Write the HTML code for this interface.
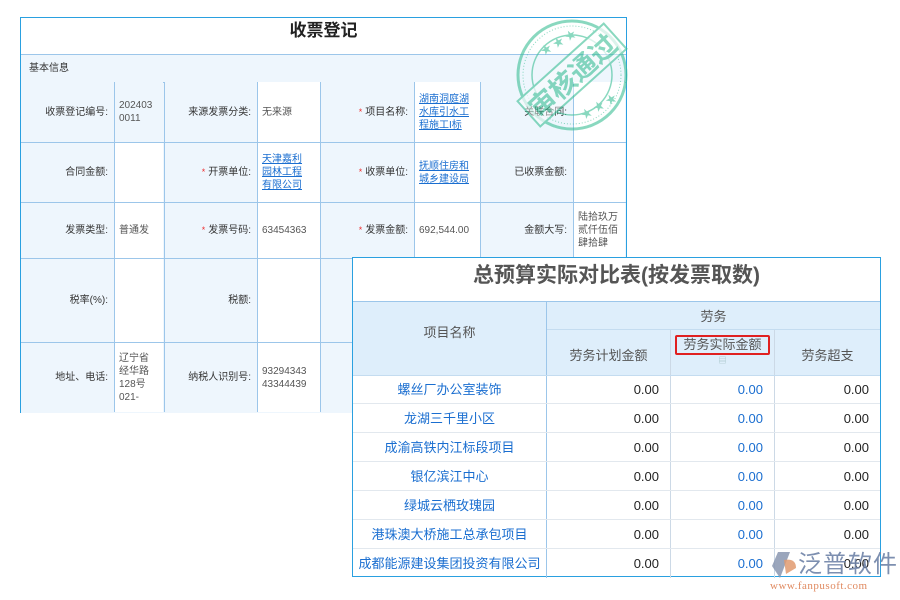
<!DOCTYPE html>
<html><head><meta charset="utf-8"><style>
*{margin:0;padding:0;box-sizing:border-box}
body{width:900px;height:600px;background:#fff;position:relative;overflow:hidden;font-family:"Liberation Sans","Noto Sans CJK SC",sans-serif;color:#333}
.a{position:absolute}
#back{left:20px;top:17px;width:607px;height:396px;border:1px solid #2aa0e0;background:#fff}
.bt{left:0;top:0;width:605px;height:36px;text-align:center;font-size:17px;font-weight:bold;line-height:26px;color:#222}
.hl{position:absolute;background:#9cc6ea}
.cell{position:absolute;font-size:10px;display:flex;align-items:center;line-height:13px}
.lab{justify-content:flex-end;padding-right:6px;background:#eef6fd}
.val{padding-left:4px;color:#555;background:#fff}
.lk{color:#1a6ed0;text-decoration:underline}
.st{color:#e33;margin-right:3px;font-size:9px}
#front{left:352px;top:257px;width:529px;height:320px;border:1px solid #2aa0e0;background:#fff}
.ft{left:0;top:0;width:527px;height:43px;text-align:center;font-size:21px;font-weight:bold;line-height:36px;color:#555}
.fh{position:absolute;background:#deeefb;color:#555;font-size:13px;display:flex;align-items:center;justify-content:center}
.fr{position:absolute;font-size:13px;height:29px;line-height:29px}
</style></head><body>
<div id="back" class="a">
 <div class="a bt">收票登记</div>
 <div class="a" style="left:0;top:36px;width:605px;height:29px;background:#eef6fd;border-top:1px solid #9cc6ea;border-bottom:1px solid #9cc6ea;font-size:10px;line-height:27px;padding-left:8px">基本信息</div>
 <div class="a" style="left:0;top:65px;width:605px;height:330px;background:#eef6fd"></div>
</div>
<div class="a" style="left:20px;top:82px;width:607px;height:331px">
 <div class="cell lab" style="left:1px;top:0;width:93px;height:60px">收票登记编号:</div>
 <div class="cell val" style="left:95px;top:0;width:48px;height:60px;background:#eef6fd">202403<br>0011</div>
 <div class="cell lab" style="left:144px;top:0;width:93px;height:60px">来源发票分类:</div>
 <div class="cell val" style="left:238px;top:0;width:62px;height:60px">无来源</div>
 <div class="cell lab" style="left:301px;top:0;width:93px;height:60px"><span class="st">*</span>项目名称:</div>
 <div class="cell val lk" style="left:395px;top:0;width:65px;height:60px">湖南洞庭湖<br>水库引水工<br>程施工I标</div>
 <div class="cell lab" style="left:461px;top:0;width:92px;height:60px">关联合同:</div>
 <div class="cell val" style="left:554px;top:0;width:51px;height:60px"></div>
 <div class="cell lab" style="left:1px;top:61px;width:93px;height:59px">合同金额:</div>
 <div class="cell val" style="left:95px;top:61px;width:48px;height:59px"></div>
 <div class="cell lab" style="left:144px;top:61px;width:93px;height:59px"><span class="st">*</span>开票单位:</div>
 <div class="cell val lk" style="left:238px;top:61px;width:62px;height:59px">天津嘉利<br>园林工程<br>有限公司</div>
 <div class="cell lab" style="left:301px;top:61px;width:93px;height:59px"><span class="st">*</span>收票单位:</div>
 <div class="cell val lk" style="left:395px;top:61px;width:65px;height:59px">抚顺住房和<br>城乡建设局</div>
 <div class="cell lab" style="left:461px;top:61px;width:92px;height:59px">已收票金额:</div>
 <div class="cell val" style="left:554px;top:61px;width:51px;height:59px"></div>
 <div class="cell lab" style="left:1px;top:121px;width:93px;height:55px">发票类型:</div>
 <div class="cell val" style="left:95px;top:121px;width:48px;height:55px">普通发</div>
 <div class="cell lab" style="left:144px;top:121px;width:93px;height:55px"><span class="st">*</span>发票号码:</div>
 <div class="cell val" style="left:238px;top:121px;width:62px;height:55px">63454363</div>
 <div class="cell lab" style="left:301px;top:121px;width:93px;height:55px"><span class="st">*</span>发票金额:</div>
 <div class="cell val" style="left:395px;top:121px;width:65px;height:55px">692,544.00</div>
 <div class="cell lab" style="left:461px;top:121px;width:92px;height:55px">金额大写:</div>
 <div class="cell val" style="left:554px;top:121px;width:51px;height:55px">陆拾玖万<br>贰仟伍佰<br>肆拾肆</div>
 <div class="cell lab" style="left:1px;top:177px;width:93px;height:83px">税率(%):</div>
 <div class="cell val" style="left:95px;top:177px;width:48px;height:83px"></div>
 <div class="cell lab" style="left:144px;top:177px;width:93px;height:83px">税额:</div>
 <div class="cell val" style="left:238px;top:177px;width:62px;height:83px"></div>
 <div class="cell lab" style="left:301px;top:177px;width:93px;height:83px"></div>
 <div class="cell lab" style="left:1px;top:261px;width:93px;height:69px">地址、电话:</div>
 <div class="cell val" style="left:95px;top:261px;width:48px;height:69px">辽宁省<br>经华路<br>128号<br>021-</div>
 <div class="cell lab" style="left:144px;top:261px;width:93px;height:69px">纳税人识别号:</div>
 <div class="cell val" style="left:238px;top:261px;width:62px;height:69px">93294343<br>43344439</div>
 <div class="cell lab" style="left:301px;top:261px;width:93px;height:69px"></div>
 <div class="cell val" style="left:395px;top:177px;width:65px;height:153px"></div>
</div>
<div class="hl" style="left:21px;top:142px;width:605px;height:1px"></div>
<div class="hl" style="left:21px;top:202px;width:605px;height:1px"></div>
<div class="hl" style="left:21px;top:258px;width:605px;height:1px"></div>
<div class="hl" style="left:21px;top:342px;width:605px;height:1px"></div>
<div class="hl" style="left:114px;top:82px;width:1px;height:330px"></div>
<div class="hl" style="left:164px;top:82px;width:1px;height:330px"></div>
<div class="hl" style="left:257px;top:82px;width:1px;height:330px"></div>
<div class="hl" style="left:320px;top:82px;width:1px;height:330px"></div>
<div class="hl" style="left:414px;top:82px;width:1px;height:330px"></div>
<div class="hl" style="left:480px;top:82px;width:1px;height:176px"></div>
<div class="hl" style="left:573px;top:82px;width:1px;height:176px"></div>
<svg class="a" style="left:510px;top:13px" width="124" height="124" viewBox="0 0 124 124">
 <g opacity="0.6" fill="none" stroke="#3cbf95">
  <circle cx="62" cy="62" r="54" stroke-width="3"/>
  <circle cx="62" cy="62" r="49" stroke-width="1" stroke-dasharray="1 2"/>
  <circle cx="62" cy="62" r="40" stroke-width="1.5"/>
  <g transform="rotate(-42 62 62)">
   <rect x="4" y="45" width="116" height="34" fill="#fff" fill-opacity="0.7" stroke-width="2"/>
   <text x="62" y="73" text-anchor="middle" font-size="27" font-weight="bold" fill="#3cbf95" stroke="none" font-family="Noto Sans CJK SC,sans-serif">审核通过</text>
  </g>
  <text x="30" y="38" font-size="11" fill="#3cbf95" stroke="none" transform="rotate(-30 40 34)">★ ★ ★</text>
  <text x="70" y="100" font-size="11" fill="#3cbf95" stroke="none" transform="rotate(-30 84 96)">★ ★ ★</text>
 </g>
</svg>
<div id="front" class="a">
 <div class="a ft">总预算实际对比表(按发票取数)</div>
 <div class="fh" style="left:0;top:43px;width:193px;height:74px;border-top:1px solid #9cc6ea;padding-bottom:14px">项目名称</div>
 <div class="fh" style="left:194px;top:43px;width:333px;height:28px;border-top:1px solid #9cc6ea">劳务</div>
 <div class="fh" style="left:194px;top:72px;width:123px;height:45px;padding-top:4px">劳务计划金额</div>
 <div class="fh" style="left:318px;top:72px;width:103px;height:45px;flex-direction:column;justify-content:flex-start;padding-top:5px"><span style="border:2px solid #e02020;border-radius:2px;padding:0 6px;line-height:16px">劳务实际金额</span><span style="font-size:8px;color:#9bb">▤</span></div>
 <div class="fh" style="left:422px;top:72px;width:105px;height:45px;padding-top:4px">劳务超支</div>
 <div class="hl" style="left:193px;top:43px;width:1px;height:277px"></div>
 <div class="hl" style="left:317px;top:72px;width:1px;height:248px;background:#ccd9e6"></div>
 <div class="hl" style="left:421px;top:72px;width:1px;height:248px;background:#ccd9e6"></div>
 <div class="hl" style="left:194px;top:71px;width:333px;height:1px;background:#c4dcf0"></div>
 <div class="hl" style="left:0;top:117px;width:527px;height:1px;background:#c4dcf0"></div>
</div>
<div class="a" style="left:353px;top:375px;width:527px">
 <div style="position:relative;height:29px;border-bottom:1px solid #e2e8ee"><span class="fr" style="left:0;width:193px;text-align:center;color:#1a6ed0">螺丝厂办公室装饰</span><span class="fr" style="left:194px;width:112px;text-align:right;color:#222">0.00</span><span class="fr" style="left:318px;width:92px;text-align:right;color:#1a6ed0">0.00</span><span class="fr" style="left:422px;width:94px;text-align:right;color:#222">0.00</span></div>
 <div style="position:relative;height:29px;border-bottom:1px solid #e2e8ee"><span class="fr" style="left:0;width:193px;text-align:center;color:#1a6ed0">龙湖三千里小区</span><span class="fr" style="left:194px;width:112px;text-align:right;color:#222">0.00</span><span class="fr" style="left:318px;width:92px;text-align:right;color:#1a6ed0">0.00</span><span class="fr" style="left:422px;width:94px;text-align:right;color:#222">0.00</span></div>
 <div style="position:relative;height:29px;border-bottom:1px solid #e2e8ee"><span class="fr" style="left:0;width:193px;text-align:center;color:#1a6ed0">成渝高铁内江标段项目</span><span class="fr" style="left:194px;width:112px;text-align:right;color:#222">0.00</span><span class="fr" style="left:318px;width:92px;text-align:right;color:#1a6ed0">0.00</span><span class="fr" style="left:422px;width:94px;text-align:right;color:#222">0.00</span></div>
 <div style="position:relative;height:29px;border-bottom:1px solid #e2e8ee"><span class="fr" style="left:0;width:193px;text-align:center;color:#1a6ed0">银亿滨江中心</span><span class="fr" style="left:194px;width:112px;text-align:right;color:#222">0.00</span><span class="fr" style="left:318px;width:92px;text-align:right;color:#1a6ed0">0.00</span><span class="fr" style="left:422px;width:94px;text-align:right;color:#222">0.00</span></div>
 <div style="position:relative;height:29px;border-bottom:1px solid #e2e8ee"><span class="fr" style="left:0;width:193px;text-align:center;color:#1a6ed0">绿城云栖玫瑰园</span><span class="fr" style="left:194px;width:112px;text-align:right;color:#222">0.00</span><span class="fr" style="left:318px;width:92px;text-align:right;color:#1a6ed0">0.00</span><span class="fr" style="left:422px;width:94px;text-align:right;color:#222">0.00</span></div>
 <div style="position:relative;height:29px;border-bottom:1px solid #e2e8ee"><span class="fr" style="left:0;width:193px;text-align:center;color:#1a6ed0">港珠澳大桥施工总承包项目</span><span class="fr" style="left:194px;width:112px;text-align:right;color:#222">0.00</span><span class="fr" style="left:318px;width:92px;text-align:right;color:#1a6ed0">0.00</span><span class="fr" style="left:422px;width:94px;text-align:right;color:#222">0.00</span></div>
 <div style="position:relative;height:29px"><span class="fr" style="left:0;width:193px;text-align:center;color:#1a6ed0;white-space:nowrap">成都能源建设集团投资有限公司</span><span class="fr" style="left:194px;width:112px;text-align:right;color:#222">0.00</span><span class="fr" style="left:318px;width:92px;text-align:right;color:#1a6ed0">0.00</span><span class="fr" style="left:422px;width:94px;text-align:right;color:#222">0.00</span></div>
</div>
<svg class="a" style="left:770px;top:550px" width="30" height="30" viewBox="0 0 30 30"><path d="M8 2 L20 2 L10 28 L2 16 Z" fill="#8a97b0" opacity="0.85"/><path d="M14 10 Q26 8 26 18 L16 24 Z" fill="#e09a70" opacity="0.85"/></svg>
<div class="a" style="left:798px;top:548px;font-size:24px;color:#6f83a8;opacity:0.9;letter-spacing:1px;font-family:'Noto Sans CJK SC',sans-serif;line-height:28px">泛普软件</div>
<div class="a" style="left:770px;top:580px;font-size:11px;color:#e08a60;font-family:'Liberation Serif',serif;letter-spacing:0.5px">www.fanpusoft.com</div>
</body></html>
